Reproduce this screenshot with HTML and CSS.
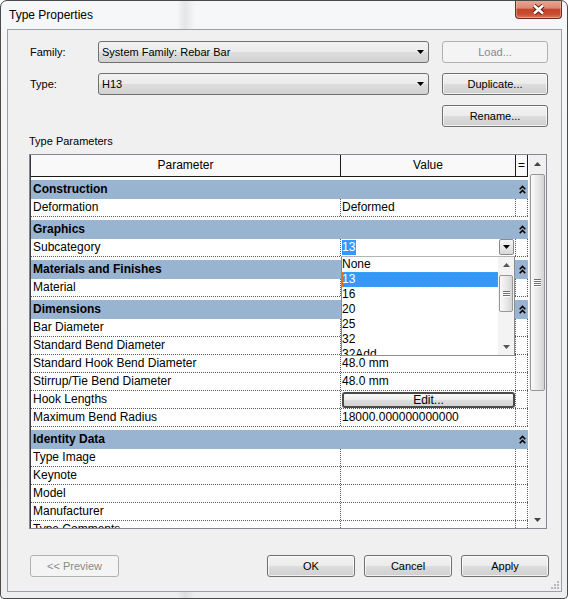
FILE: index.html
```html
<!DOCTYPE html>
<html lang="en">
<head>
    <meta charset="UTF-8">
    <title>Type Properties</title>
    <link rel="stylesheet" href="styles.css">
</head>
<body>

<div class="window">
    <div class="titlebar">
        <span class="title">Type Properties</span>
        <div class="close-btn">
            <svg width="13" height="11" viewBox="0 0 13 11">
                <path d="M2 1.5L11 9.5M11 1.5L2 9.5" stroke="#5a1c14" stroke-width="4.4" fill="none"/>
                <path d="M2 1.5L11 9.5M11 1.5L2 9.5" stroke="#fff" stroke-width="2.4" fill="none"/>
            </svg>
        </div>
    </div>

    <div class="client">
        <div class="type-select">
            <label>Family:</label>
            <div class="combo">
                <span>System Family: Rebar Bar</span>
                <svg width="7" height="4" viewBox="0 0 7 4"><path d="M0 0h7L3.5 4z" fill="#000"/></svg>
            </div>
            <button class="btn" disabled>Load...</button>

            <label>Type:</label>
            <div class="combo">
                <span>H13</span>
                <svg width="7" height="4" viewBox="0 0 7 4"><path d="M0 0h7L3.5 4z" fill="#000"/></svg>
            </div>
            <button class="btn">Duplicate...</button>

            <span></span>
            <span></span>
            <button class="btn">Rename...</button>
        </div>

        <div class="section-label">Type Parameters</div>

        <div class="grid">
            <div class="table">
                <div class="head">
                    <div class="h1">Parameter</div>
                    <div class="h2">Value</div>
                    <div class="h3">=</div>
                </div>

                <div class="group-head">
                    <span class="gname">Construction</span>
                    <span class="collapse"><svg width="7" height="9" viewBox="0 0 7 9"><path d="M0.7 4.2L3.5 1.4L6.3 4.2M0.7 8.2L3.5 5.4L6.3 8.2" stroke="#000" stroke-width="1.6" fill="none"/></svg></span>
                </div>
                <div class="row"><div class="c1">Deformation</div><div class="c2">Deformed</div><div class="c3"></div></div>

                <div class="group-head">
                    <span class="gname">Graphics</span>
                    <span class="collapse"><svg width="7" height="9" viewBox="0 0 7 9"><path d="M0.7 4.2L3.5 1.4L6.3 4.2M0.7 8.2L3.5 5.4L6.3 8.2" stroke="#000" stroke-width="1.6" fill="none"/></svg></span>
                </div>
                <div class="row">
                    <div class="c1">Subcategory</div>
                    <div class="c2 edit-cell">
                        <span class="sel">13</span>
                        <span class="dd-btn"><svg width="7" height="4" viewBox="0 0 7 4"><path d="M0 0h7L3.5 4z" fill="#000"/></svg></span>
                    </div>
                    <div class="c3"></div>
                </div>

                <div class="group-head">
                    <span class="gname">Materials and Finishes</span>
                    <span class="collapse"><svg width="7" height="9" viewBox="0 0 7 9"><path d="M0.7 4.2L3.5 1.4L6.3 4.2M0.7 8.2L3.5 5.4L6.3 8.2" stroke="#000" stroke-width="1.6" fill="none"/></svg></span>
                </div>
                <div class="row"><div class="c1">Material</div><div class="c2"></div><div class="c3"></div></div>

                <div class="group-head">
                    <span class="gname">Dimensions</span>
                    <span class="collapse"><svg width="7" height="9" viewBox="0 0 7 9"><path d="M0.7 4.2L3.5 1.4L6.3 4.2M0.7 8.2L3.5 5.4L6.3 8.2" stroke="#000" stroke-width="1.6" fill="none"/></svg></span>
                </div>
                <!-- values of these two rows sit under the open list -->
                <div class="row"><div class="c1">Bar Diameter</div><div class="c2"></div><div class="c3"></div></div>
                <div class="row"><div class="c1">Standard Bend Diameter</div><div class="c2"></div><div class="c3"></div></div>
                <div class="row"><div class="c1">Standard Hook Bend Diameter</div><div class="c2">48.0 mm</div><div class="c3"></div></div>
                <div class="row"><div class="c1">Stirrup/Tie Bend Diameter</div><div class="c2">48.0 mm</div><div class="c3"></div></div>
                <div class="row">
                    <div class="c1">Hook Lengths</div>
                    <div class="c2 btn-cell"><button class="edit-btn">Edit...</button></div>
                    <div class="c3"></div>
                </div>
                <div class="row"><div class="c1">Maximum Bend Radius</div><div class="c2">18000.000000000000</div><div class="c3"></div></div>

                <div class="group-head">
                    <span class="gname">Identity Data</span>
                    <span class="collapse"><svg width="7" height="9" viewBox="0 0 7 9"><path d="M0.7 4.2L3.5 1.4L6.3 4.2M0.7 8.2L3.5 5.4L6.3 8.2" stroke="#000" stroke-width="1.6" fill="none"/></svg></span>
                </div>
                <div class="row"><div class="c1">Type Image</div><div class="c2"></div><div class="c3"></div></div>
                <div class="row"><div class="c1">Keynote</div><div class="c2"></div><div class="c3"></div></div>
                <div class="row"><div class="c1">Model</div><div class="c2"></div><div class="c3"></div></div>
                <div class="row"><div class="c1">Manufacturer</div><div class="c2"></div><div class="c3"></div></div>
                <div class="row"><div class="c1">Type Comments</div><div class="c2"></div><div class="c3"></div></div>
            </div>

            <div class="vscroll">
                <div class="arrow-btn"><svg width="7" height="4" viewBox="0 0 7 4"><path d="M0 4h7L3.5 0z" fill="#444"/></svg></div>
                <div class="track">
                    <div class="thumb big"><span class="grip-lines"><i></i><i></i><i></i><i></i></span></div>
                </div>
                <div class="arrow-btn"><svg width="7" height="4" viewBox="0 0 7 4"><path d="M0 0h7L3.5 4z" fill="#444"/></svg></div>
            </div>

            <!-- open drop-down of the Subcategory cell -->
            <div class="dropdown">
                <div class="items">
                    <div class="item">None</div>
                    <div class="item selected">13</div>
                    <div class="item">16</div>
                    <div class="item">20</div>
                    <div class="item">25</div>
                    <div class="item">32</div>
                    <div class="item">32Add</div>
                </div>
                <div class="list-scroll">
                    <div class="arrow-btn small"><svg width="7" height="4" viewBox="0 0 7 4"><path d="M0 4h7L3.5 0z" fill="#555"/></svg></div>
                    <div class="track">
                        <div class="thumb"><span class="grip-lines"><i></i><i></i><i></i></span></div>
                    </div>
                    <div class="arrow-btn small"><svg width="7" height="4" viewBox="0 0 7 4"><path d="M0 0h7L3.5 4z" fill="#555"/></svg></div>
                </div>
            </div>
        </div>

        <div class="actions">
            <button class="btn preview" disabled>&lt;&lt; Preview</button>
            <button class="btn push">OK</button>
            <button class="btn">Cancel</button>
            <button class="btn">Apply</button>
        </div>

        <svg class="size-grip" width="10" height="10" viewBox="0 0 10 10">
            <rect x="7" y="1" width="2" height="2" fill="#b8b8b8"/>
            <rect x="4" y="4" width="2" height="2" fill="#b8b8b8"/>
            <rect x="7" y="4" width="2" height="2" fill="#b8b8b8"/>
            <rect x="1" y="7" width="2" height="2" fill="#b8b8b8"/>
            <rect x="4" y="7" width="2" height="2" fill="#b8b8b8"/>
            <rect x="7" y="7" width="2" height="2" fill="#b8b8b8"/>
        </svg>
    </div>
</div>

</body>
</html>
```

FILE: styles.css
```css
body {
    margin: 0;
    padding: 0;
    font-family: "Liberation Sans", Arial, sans-serif;
    font-size: 12px;
    color: #000;
    background: #fff;
}

.window {
    width: 568px;
    height: 599px;
    box-sizing: border-box;
    border: 1px solid #4a4a4a;
    border-radius: 7px 7px 4px 4px;
    background:
        linear-gradient(90deg, rgba(0,0,0,0) 176px, rgba(0,0,0,0.07) 184px, rgba(0,0,0,0) 194px),
        linear-gradient(#f6f7f8, #eceef0);
    display: flex;
    flex-direction: column;
    overflow: hidden;
}

.titlebar {
    height: 28px;
    display: flex;
    justify-content: space-between;
    align-items: flex-start;
    padding: 0 5px 0 8px;
    flex-shrink: 0;
}

.title {
    line-height: 28px;
    font-size: 12px;
}

.close-btn {
    width: 47px;
    height: 19px;
    margin-top: -1px;
    box-sizing: border-box;
    border: 1px solid #6e2b22;
    border-top: none;
    border-radius: 0 0 4px 4px;
    background: linear-gradient(#eaa897 0%, #dc8874 45%, #c4452c 52%, #c84a30 78%, #e0795b 100%);
    box-shadow: inset 0 0 0 1px rgba(255, 200, 180, 0.45);
    display: flex;
    align-items: center;
    justify-content: center;
}

.client {
    position: relative;
    flex: 1;
    margin: 0 5px 6px 6px;
    border: 1px solid #9aa0a6;
    background: #f0f0f0;
    display: flex;
    flex-direction: column;
}

/* top selectors */

.type-select {
    display: grid;
    grid-template-columns: 55px 331px 106px;
    grid-template-rows: 22px 22px 22px;
    column-gap: 13px;
    row-gap: 10px;
    padding: 11px 0 0 22px;
    font-size: 11px;
}

.type-select label {
    align-self: center;
}

.combo {
    box-sizing: border-box;
    border: 1px solid #707070;
    border-radius: 3px;
    background: linear-gradient(#f2f2f2 0%, #ebebeb 50%, #dddddd 51%, #d2d2d2 100%);
    display: flex;
    align-items: center;
    justify-content: space-between;
    padding: 0 4px 0 3px;
}

.btn {
    font-family: "Liberation Sans", Arial, sans-serif;
    font-size: 11px;
    color: #000;
    padding: 0;
    box-sizing: border-box;
    height: 22px;
    border: 1px solid #707070;
    border-radius: 3px;
    background: linear-gradient(#f2f2f2 0%, #ebebeb 50%, #dddddd 51%, #cfcfcf 100%);
    box-shadow: inset 0 0 0 1px rgba(255, 255, 255, 0.7);
}

.btn:disabled {
    border-color: #adb2b5;
    background: #f4f4f4;
    color: #8a8a8a;
    box-shadow: none;
}

.section-label {
    margin: 7px 0 0 21px;
    line-height: 14px;
    font-size: 11px;
}

/* property grid */

.grid {
    position: relative;
    margin: 6px 0 0 21px;
    width: 518px;
    height: 375px;
    box-sizing: border-box;
    border: 1px solid #828790;
    background: #fff;
    display: flex;
    overflow: hidden;
}

.table {
    width: 498px;
    border-left: 1px solid #3a3a3a;
    box-sizing: border-box;
    flex-shrink: 0;
    overflow: hidden;
}

.head {
    display: flex;
    height: 22px;
    box-sizing: border-box;
    border-bottom: 1px solid #1a1a1a;
    background: #f9f9f9;
    line-height: 21px;
    text-align: center;
}

.h1, .c1 {
    width: 310px;
}

.h2, .c2 {
    width: 175px;
}

.h3, .c3 {
    width: 12px;
}

.h1, .h2, .h3 {
    box-sizing: border-box;
    border-right: 1px solid #1a1a1a;
}

.group-head {
    display: flex;
    height: 19px;
    margin-top: 3px;
    background: #99b4d1;
    font-weight: bold;
    line-height: 19px;
}

.gname {
    width: 485px;
    padding-left: 2px;
    box-sizing: border-box;
}

.collapse {
    width: 12px;
    display: flex;
    align-items: center;
    justify-content: center;
}

.row {
    display: flex;
    height: 18px;
    box-sizing: border-box;
    border-bottom: 1px dotted #5c5c5c;
    line-height: 17px;
    white-space: nowrap;
}

.c1, .c2, .c3 {
    box-sizing: border-box;
    border-right: 1px dotted #5c5c5c;
    overflow: hidden;
}

.c1 {
    padding-left: 2px;
}

.c2 {
    padding-left: 1px;
}

.edit-cell {
    display: flex;
    justify-content: space-between;
    align-items: flex-start;
    padding-right: 1px;
}

.sel {
    background: #3399ff;
    color: #fff;
    line-height: 15px;
    margin-top: 1px;
    padding: 0 1px 0 0;
}

.dd-btn {
    width: 15px;
    height: 16px;
    box-sizing: border-box;
    border: 1px solid #8a8a8a;
    border-radius: 2px;
    background: linear-gradient(#f6f6f6, #d9d9d9);
    display: flex;
    align-items: center;
    justify-content: center;
}

.btn-cell {
    padding: 1px 0 0 1px;
}

.edit-btn {
    display: block;
    width: 173px;
    height: 16px;
    padding: 0;
    box-sizing: border-box;
    border: 2px solid #4a4a4a;
    border-radius: 3px;
    background: linear-gradient(#fbfbfb 0%, #ececec 50%, #dedede 51%, #d4d4d4 100%);
    font-family: "Liberation Sans", Arial, sans-serif;
    font-size: 12px;
    line-height: 12px;
    color: #000;
}

/* scroll bars */

.vscroll {
    margin-left: 1px;
    width: 17px;
    background: #f0f0f0;
    display: flex;
    flex-direction: column;
}

.arrow-btn {
    height: 17px;
    display: flex;
    align-items: center;
    justify-content: center;
    flex-shrink: 0;
}

.arrow-btn.small {
    height: 16px;
}

.track {
    flex: 1;
    position: relative;
}

.thumb {
    box-sizing: border-box;
    margin: 2px 1px 0 1px;
    height: 36px;
    border: 1px solid #979797;
    border-radius: 2px;
    background: linear-gradient(90deg, #fafafa, #e6e6e6 60%, #d4d4d4);
    display: flex;
    align-items: center;
    justify-content: center;
}

.thumb.big {
    height: 217px;
}

.grip-lines {
    display: flex;
    flex-direction: column;
    gap: 1px;
}

.grip-lines i {
    display: block;
    width: 7px;
    height: 1px;
    background: #6e6e6e;
    box-shadow: 0 1px 0 #fff;
}

/* open drop-down list */

.dropdown {
    position: absolute;
    left: 311px;
    top: 101px;
    width: 174px;
    height: 100px;
    box-sizing: border-box;
    border: 1px solid #8c8c8c;
    border-top-color: #b4b4b4;
    background: #fff;
    display: flex;
    overflow: hidden;
}

.items {
    width: 156px;
    overflow: hidden;
}

.item {
    height: 15px;
    line-height: 15px;
    white-space: nowrap;
}

.item.selected {
    background: #3399ff;
    color: #fff;
    outline: 1px dotted #e07b1a;
    outline-offset: -1px;
}

.list-scroll {
    width: 16px;
    background: #f3f3f3;
    display: flex;
    flex-direction: column;
}

.list-scroll .thumb {
    margin-top: 2px;
    height: 37px;
}

/* bottom buttons */

.actions {
    display: flex;
    gap: 9px;
    margin-top: 26px;
    padding: 0 12px 0 22px;
}

.actions .btn {
    width: 88px;
}

.actions .preview {
    width: 89px;
}

.actions .push {
    margin-left: auto;
}

.size-grip {
    position: absolute;
    right: 1px;
    bottom: 1px;
}
```
